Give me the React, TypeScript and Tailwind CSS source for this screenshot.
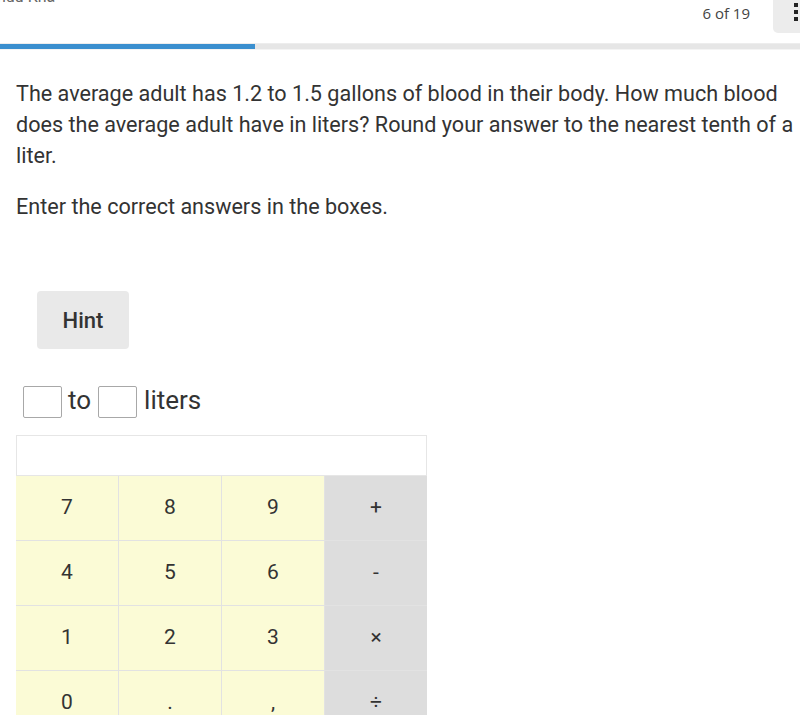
import React from "react";

const keys: { label: string; op?: boolean }[] = [
  { label: "7" }, { label: "8" }, { label: "9" }, { label: "+", op: true },
  { label: "4" }, { label: "5" }, { label: "6" }, { label: "-", op: true },
  { label: "1" }, { label: "2" }, { label: "3" }, { label: "×", op: true },
  { label: "0" }, { label: "." }, { label: "," }, { label: "÷", op: true },
];

export default function App() {
  return (
    <div className="w-[800px] h-[715px] overflow-hidden bg-white text-[#333] font-['Roboto',sans-serif]">
      {/* header */}
      <div className="relative h-[43px]">
        <div className="absolute left-[-3px] top-[-13px] text-[16px] leading-[20px] text-[#666]">ndu Kha</div>
        <div className="absolute right-[50px] top-[3px] text-[15px] leading-[20px] text-[#444] font-['Open_Sans',sans-serif]">6 of 19</div>
        <div className="absolute right-0 top-0 w-[27px] h-[33px] bg-[#ececec] rounded-bl-[5px] flex flex-col items-end gap-[3px] pt-[3px] pr-[2px]">
          <span className="block w-[4px] h-[4px] bg-[#222]" />
          <span className="block w-[4px] h-[4px] bg-[#222]" />
          <span className="block w-[4px] h-[4px] bg-[#222]" />
        </div>
      </div>
      {/* progress */}
      <div className="h-[1px] bg-[#ededed]" />
      <div className="h-[5px] bg-[#e6e6e6] flex">
        <div className="w-[255px] h-full bg-[#3a8fcf]" />
      </div>
      <div className="h-[1px] bg-[#f4f4f4]" />

      {/* question */}
      <div className="pl-4 pr-[2px] pt-[28px] text-[21.6px] leading-[31px] text-[#333]">
        <p>The average adult has 1.2 to 1.5 gallons of blood in their body. How much blood does the average adult have in liters? Round your answer to the nearest tenth of a liter.</p>
        <p className="mt-[20px]">Enter the correct answers in the boxes.</p>
      </div>

      <div className="pl-[37px] mt-[69px]">
        <button className="w-[92px] h-[58px] bg-[#e9e9e9] rounded-[4px] text-[22px] font-medium text-[#333]">Hint</button>
      </div>

      <div className="flex items-center pl-[23px] mt-[37px] h-[32px] text-[26px] text-[#333]">
        <div className="w-[39px] h-[32px] border border-[#a8a8a8] rounded-[2px] bg-white" />
        <span className="ml-[6px] mr-[7px] leading-none -mt-[4px]">to</span>
        <div className="w-[39px] h-[32px] border border-[#a8a8a8] rounded-[2px] bg-white" />
        <span className="ml-[7px] leading-none -mt-[4px]">liters</span>
      </div>

      <div className="ml-4 mt-[17px] w-[411px]">
        <div className="h-[41px] border border-[#e6e6e6] bg-white" />
        <div className="grid grid-cols-4 bg-[#e2e2e2] gap-[1px]">
          {keys.map((k) => (
            <div
              key={k.label}
              className={`h-[64px] flex items-center justify-center text-[21px] text-[#333] ${k.op ? "bg-[#dddddd]" : "bg-[#fbfbd6]"}`}
            >
              {k.label}
            </div>
          ))}
        </div>
      </div>
    </div>
  );
}
